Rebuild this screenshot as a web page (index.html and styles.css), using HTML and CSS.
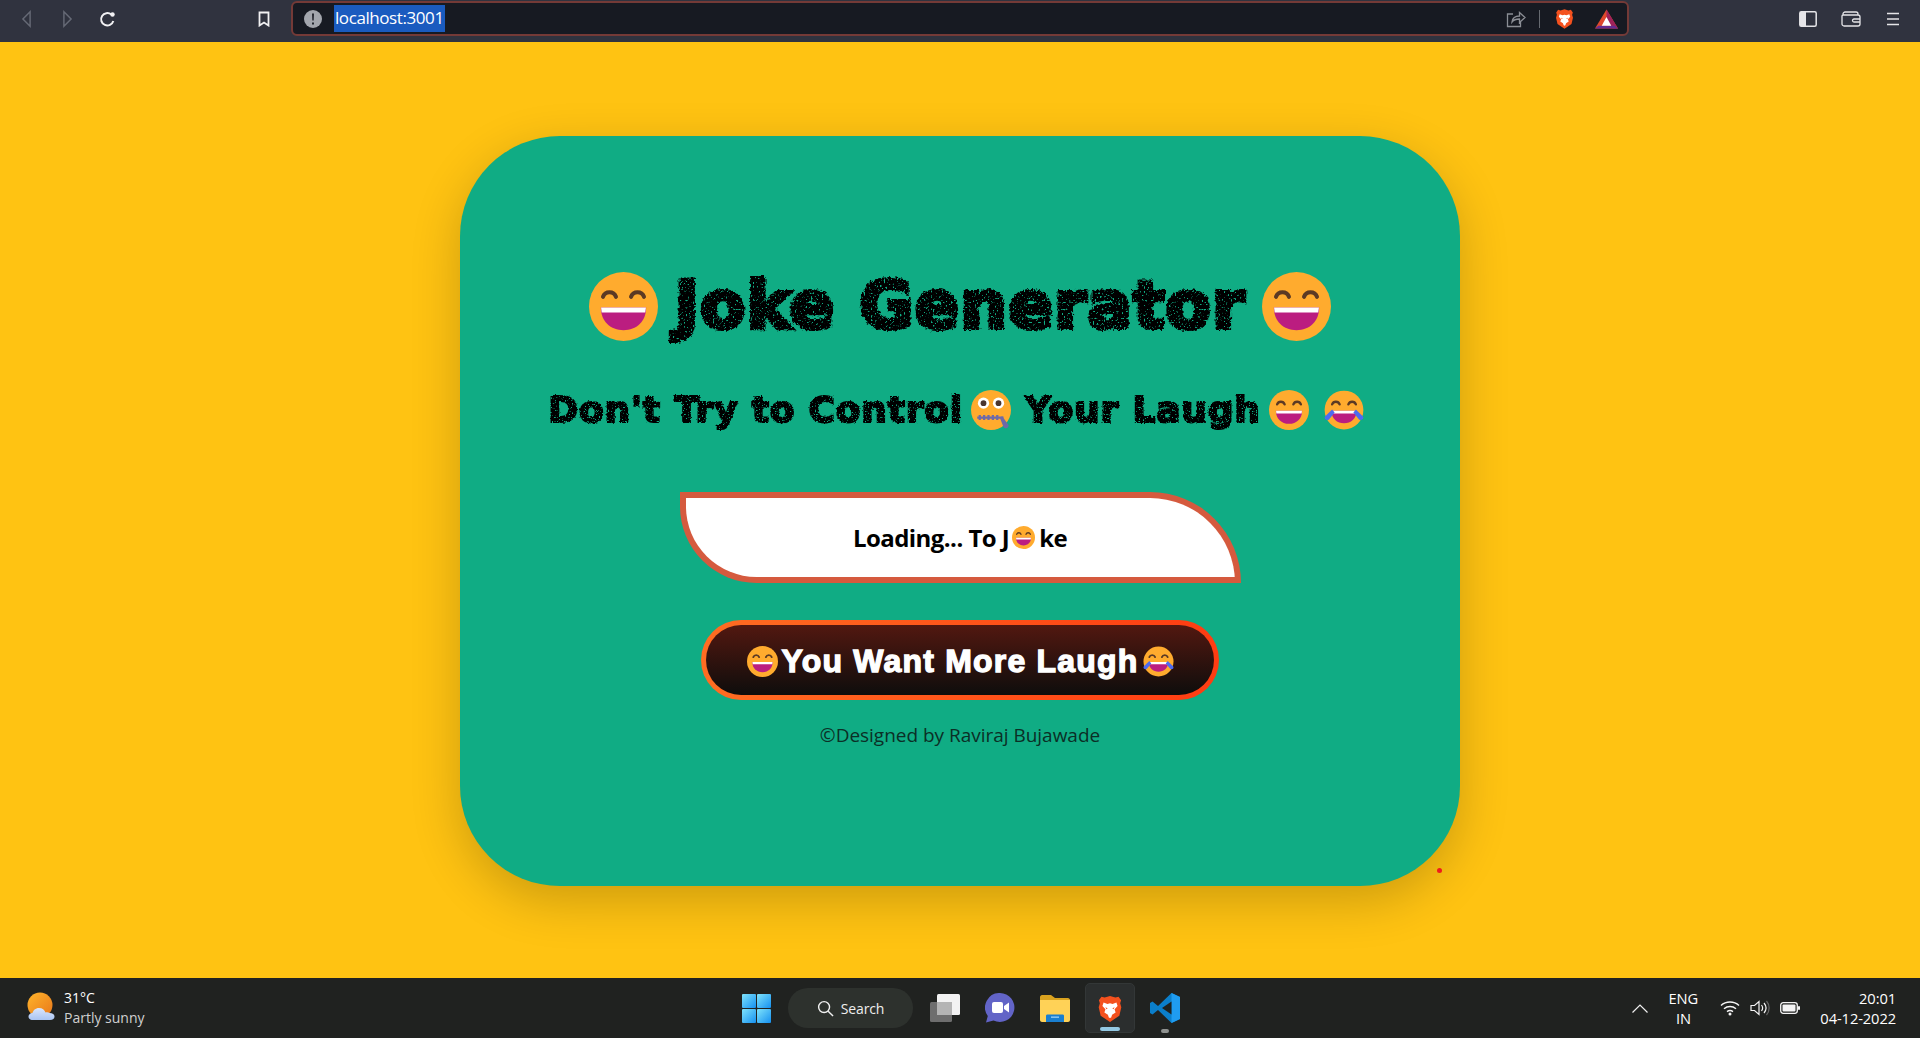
FILE: index.html
```html
<!DOCTYPE html>
<html lang="en">
<head>
<meta charset="utf-8">
<title>Joke Generator</title>
<link rel="stylesheet" href="styles.css">
</head>
<body>
<svg class="sprite" width="0" height="0" aria-hidden="true">
  <defs>
    <filter id="rough" x="-5%" y="-15%" width="110%" height="130%">
      <feTurbulence type="fractalNoise" baseFrequency="0.35" numOctaves="2" seed="4" result="n"/>
      <feDisplacementMap in="SourceGraphic" in2="n" scale="5" xChannelSelector="R" yChannelSelector="G" result="d"/>
      <feTurbulence type="fractalNoise" baseFrequency="0.55" numOctaves="1" seed="9" result="s"/>
      <feColorMatrix in="s" type="matrix" values="0 0 0 0 0 0 0 0 0 0 0 0 0 0 0 -9 0 0 0 6.4" result="m"/>
      <feComposite in="d" in2="m" operator="in"/>
    </filter>
    <filter id="rough-sm" x="-5%" y="-15%" width="110%" height="130%">
      <feTurbulence type="fractalNoise" baseFrequency="0.45" numOctaves="2" seed="7" result="n"/>
      <feDisplacementMap in="SourceGraphic" in2="n" scale="3" xChannelSelector="R" yChannelSelector="G" result="d"/>
      <feTurbulence type="fractalNoise" baseFrequency="0.7" numOctaves="1" seed="3" result="s"/>
      <feColorMatrix in="s" type="matrix" values="0 0 0 0 0 0 0 0 0 0 0 0 0 0 0 -9 0 0 0 6.4" result="m"/>
      <feComposite in="d" in2="m" operator="in"/>
    </filter>
    <symbol id="grin" viewBox="0 0 32 32">
      <circle cx="16" cy="16" r="16" fill="#ffab2e"/>
      <path d="M6.5 11.5a3.2 3.2 0 0 1 6 0M19.5 11.5a3.2 3.2 0 0 1 6 0" fill="none" stroke="#5c3a24" stroke-width="1.9" stroke-linecap="round"/>
      <path d="M5.5 16.5h21c0 6.500-4.500 10.500-10.500 10.500S5.500 23 5.500 16.500z" fill="#bb1d80"/>
      <path d="M5.600 16.500h20.800l-.3 2.300H5.900z" fill="#fff"/>
    </symbol>
    <symbol id="joy" viewBox="0 0 32 32">
      <circle cx="16" cy="16" r="15.500" fill="#ffab2e"/>
      <path d="M6.500 11.500a3.200 3.200 0 0 1 6 0M19.500 11.500a3.200 3.200 0 0 1 6 0" fill="none" stroke="#5c3a24" stroke-width="1.900" stroke-linecap="round"/>
      <path d="M6 16.500h20c0 6.500-4.500 10-10 10s-10-3.500-10-10z" fill="#bb1d80"/>
      <path d="M6 16.500h20l-.3 2.300H6.300z" fill="#fff"/>
      <path d="M6.500 15.500 1 21c-1.500 2 1 4 3 2.500l4.500-5.500zM25.500 15.500 31 21c1.500 2-1 4-3 2.500L23.500 18z" fill="#4e6bf0"/>
    </symbol>
    <symbol id="zip" viewBox="0 0 32 32">
      <circle cx="16" cy="16" r="16" fill="#ffab2e"/>
      <circle cx="10" cy="10.500" r="4.500" fill="#fff"/>
      <circle cx="22" cy="10.500" r="4.500" fill="#fff"/>
      <circle cx="10" cy="10.500" r="2.300" fill="#4a3530"/>
      <circle cx="22" cy="10.500" r="2.300" fill="#4a3530"/>
      <path d="M5 22h21M7 20v4M10.500 20v4M14 20v4M17.500 20v4M21 20v4" fill="none" stroke="#6e6aa8" stroke-width="1.800"/>
      <path d="M25 21l5 7c.5 2.500-2.500 3.500-4 1.500l-3-7.500z" fill="#6e6aa8"/>
    </symbol>
    <symbol id="brave" viewBox="0 0 24 24">
      <path d="M12 .8l4.600 1.400L19.300 1.500l2.200 3-.8 2.600 1 3.500-1.700 7.200L12 23.200l-8-5.400-1.700-7.200 1-3.500-.8-2.600 2.200-3 2.700.7z" fill="#f4511e"/>
      <path d="M6.500 6.500l3.300 1.200L12 7l2.200.7 3.300-1.200 1 3-2.600 2.800.9 2.600-3 2-.8 2.300-1 .6-1-.6-.8-2.300-3-2 .9-2.600-2.600-2.800z" fill="#fff"/>
      <path d="M8 10.500l2 .8-1 .9zM16 10.500l-2 .8 1 .9z" fill="#f4511e"/>
    </symbol>
  </defs>
</svg>

<header class="toolbar">
  <svg class="ico nav-back" viewBox="0 0 12 20"><path d="M10 2 2 10l8 8z" fill="none" stroke="#666a76" stroke-width="1.600"/></svg>
  <svg class="ico nav-fwd" viewBox="0 0 12 20"><path d="M2 2l8 8-8 8z" fill="none" stroke="#666a76" stroke-width="1.600"/></svg>
  <svg class="ico nav-reload" viewBox="0 0 16 18"><path d="M13.800 11a6.200 6.200 0 1 1-2-6.500" fill="none" stroke="#f1f1f3" stroke-width="2"/><circle cx="13" cy="4.500" r="2.200" fill="#f1f1f3"/></svg>
  <svg class="ico nav-mark" viewBox="0 0 12 16"><path d="M1.500 1.500h9v13L6 11.500l-4.500 3z" fill="none" stroke="#f1f1f3" stroke-width="1.800"/></svg>
  <div class="urlbar">
    <svg class="ico url-info" viewBox="0 0 18 18"><circle cx="9" cy="9" r="9" fill="#a3a6ad"/><path d="M8 3.500h2l-.3 7H8.300zM8 12.500h2v2H8z" fill="#23262e"/></svg>
    <span class="url-text">localhost:3001</span>
    <svg class="ico url-share" viewBox="0 0 20 18"><path d="M7 4H1.500v12.500h13V12M6 12c.5-4 3.500-6 7.500-6V2.500L19 7.500l-5.500 5V9C10 9 7.500 10 6 12z" fill="none" stroke="#8b8e95" stroke-width="1.300"/></svg>
    <span class="url-sep"></span>
    <svg class="ico url-brave" viewBox="0 0 24 24"><use href="#brave"/></svg>
    <svg class="ico url-bat" viewBox="0 0 24 20"><path d="M12 0 24 20H0z" fill="#e0482c"/><path d="M12 0 24 20H18L12 10z" fill="#a0225a"/><path d="M0 20l3.500-3h17l3.500 3z" fill="#662d91"/><path d="M12 8l5 9H7z" fill="#fff"/></svg>
  </div>
  <svg class="ico tb-side" viewBox="0 0 18 16"><rect x=".8" y=".8" width="16.400" height="14.400" rx="1.500" fill="none" stroke="#e5e5e8" stroke-width="1.500"/><rect x="1" y="1" width="6" height="14" fill="#e5e5e8"/></svg>
  <svg class="ico tb-wallet" viewBox="0 0 20 16"><path d="M2 4.500V3c0-1 1-2 2-2h11c1 0 2 1 2 2v1.500M1 5c0-.5.500-1 1-1h15c1 0 2 1 2 2v7c0 1-1 2-2 2H3c-1 0-2-1-2-2zM13 8h6v3h-6a1.500 1.500 0 0 1 0-3z" fill="none" stroke="#e5e5e8" stroke-width="1.300"/></svg>
  <svg class="ico tb-menu" viewBox="0 0 12 14"><path d="M0 1.500h12M0 7h12M0 12.500h12" stroke="#e5e5e8" stroke-width="1.500"/></svg>
</header>

<main class="page">
  <section class="card">
    <h1 class="title">
      <svg class="emoji emoji-xl" viewBox="0 0 32 32"><use href="#grin"/></svg>
      <span class="rough-text">Joke Generator</span>
      <svg class="emoji emoji-xl" viewBox="0 0 32 32"><use href="#grin"/></svg>
    </h1>
    <h2 class="subtitle">
      <span class="rough-sub">Don't Try to Control</span>
      <svg class="emoji emoji-lg" viewBox="0 0 32 32"><use href="#zip"/></svg>
      <span class="rough-sub sub-laugh">Your Laugh</span>
      <svg class="emoji emoji-lg" viewBox="0 0 32 32"><use href="#grin"/></svg>
      <svg class="emoji emoji-lg emoji-joy" viewBox="0 0 32 32"><use href="#joy"/></svg>
    </h2>
    <div class="joke">
      <span>Loading... To J</span><svg class="emoji emoji-sm" viewBox="0 0 32 32"><use href="#grin"/></svg><span>ke</span>
    </div>
    <button class="more" type="button">
      <svg class="emoji emoji-btn" viewBox="0 0 32 32"><use href="#grin"/></svg>
      <span>You Want More Laugh</span>
      <svg class="emoji emoji-btn" viewBox="0 0 32 32"><use href="#joy"/></svg>
    </button>
    <p class="credit">©Designed by Raviraj Bujawade</p>
    <span class="dot"></span>
  </section>
</main>

<footer class="taskbar">
  <div class="tb-left">
    <svg class="weather" viewBox="0 0 28 32">
      <defs>
        <linearGradient id="sun" x1="0" y1="0" x2="1" y2="1"><stop offset="0" stop-color="#ffb52b"/><stop offset="1" stop-color="#e8761a"/></linearGradient>
        <linearGradient id="cloud" x1="0" y1="0" x2="0" y2="1"><stop offset="0" stop-color="#dbe6fb"/><stop offset="1" stop-color="#a9c4f2"/></linearGradient>
      </defs>
      <circle cx="13" cy="13" r="12.500" fill="url(#sun)"/>
      <path d="M6 28c-3.500 0-4.500-2-4.500-3.500S3 21 5.500 21c.5-2.500 3-5 6.500-5s5.500 2 6.500 4.500c1-.5 3-.5 4 .5 3 0 5 1.500 5 3.500S26 28 23 28z" fill="url(#cloud)"/>
    </svg>
    <div class="weather-text">
      <span class="temp">31°C</span>
      <span class="cond">Partly sunny</span>
    </div>
  </div>
  <div class="tb-center">
    <svg class="win" viewBox="0 0 29 29">
      <defs><linearGradient id="w" x1="0" y1="0" x2="1" y2="1"><stop offset="0" stop-color="#7fe3fb"/><stop offset="1" stop-color="#1590f0"/></linearGradient></defs>
      <rect width="14" height="14" rx="1" fill="url(#w)"/><rect x="15" width="14" height="14" rx="1" fill="url(#w)"/><rect y="15" width="14" height="14" rx="1" fill="url(#w)"/><rect x="15" y="15" width="14" height="14" rx="1" fill="url(#w)"/>
    </svg>
    <div class="search">
      <svg class="search-ico" viewBox="0 0 18 18"><circle cx="7.500" cy="7.500" r="5.800" fill="none" stroke="#f0f0f0" stroke-width="1.500"/><path d="M11.800 11.800 17 17" stroke="#f0f0f0" stroke-width="1.500"/></svg>
      <span>Search</span>
    </div>
    <svg class="app app-task" viewBox="0 0 30 28"><rect x="7" y="0" width="23" height="21" rx="1.500" fill="#f2f2f2"/><rect x="0" y="8" width="22" height="20" rx="1.500" fill="#6e6e6e"/><rect x="7" y="8" width="15" height="13" fill="#b4b4b4"/></svg>
    <svg class="app app-teams" viewBox="0 0 30 30"><path d="M15 0a14.500 14.500 0 1 1-6.500 27.500L1 29.500l1.800-6.500A14.500 14.500 0 0 1 15 0z" fill="#6264c7"/><rect x="7" y="9" width="11" height="11" rx="2" fill="#fff"/><path d="M19 13l5-3.500v10L19 16z" fill="#fff"/></svg>
    <svg class="app app-folder" viewBox="0 0 30 27"><path d="M0 2c0-1 1-2 2-2h9l4 3h13c1 0 2 1 2 2v4H0z" fill="#d9a21f"/><path d="M0 5h30v20c0 1-1 2-2 2H2c-1 0-2-1-2-2z" fill="#ffd257"/><path d="M5 27v-6c0-1 .5-1.500 1.500-1.500h15c1 0 1.500.5 1.500 1.500v6z" transform="translate(1)" fill="#1a7fd0"/><rect x="11" y="21.500" width="8" height="1.300" fill="#9bd0f5"/></svg>
    <div class="app-active">
      <svg class="brave-task" viewBox="0 0 24 24"><use href="#brave"/></svg>
      <span class="run run-on"></span>
    </div>
    <div class="app-code">
      <svg class="code-ico" viewBox="0 0 30 30"><path d="M21.500 0 30 4v22l-8.500 4L8 17l-5.500 4.500L0 20v-10l2.500-1.500L8 13z" fill="#0b7fcb"/><path d="M21.500 0 30 4v22l-8.500 4z" fill="#1f9cf0"/><path d="M21.500 8.500 12 15l9.500 6.500z" fill="#202320"/></svg>
      <span class="run"></span>
    </div>
  </div>
  <div class="tb-right">
    <svg class="chev" viewBox="0 0 16 9"><path d="M.5 8.500 8 1l7.500 7.500" fill="none" stroke="#f0f0f0" stroke-width="1.200"/></svg>
    <div class="lang"><span>ENG</span><span>IN</span></div>
    <svg class="tray tray-wifi" viewBox="0 0 20 16"><path d="M1 5.500c5-4.700 13-4.700 18 0M4 8.700c3.500-3 8.500-3 12 0M7 11.700c2-1.500 4-1.500 6 0" fill="none" stroke="#f4f4f4" stroke-width="1.500"/><circle cx="10" cy="14" r="1.500" fill="#f4f4f4"/></svg>
    <svg class="tray tray-vol" viewBox="0 0 20 16"><path d="M1 5.500h3.500L9 1.500v13l-4.500-4H1z" fill="none" stroke="#f4f4f4" stroke-width="1.200"/><path d="M11.500 5c1.500 2 1.500 4 0 6M14 3c2.500 3 2.500 7 0 10" fill="none" stroke="#f4f4f4" stroke-width="1.200"/><path d="M16.500 1c3.500 4 3.500 10 0 14" fill="none" stroke="#666" stroke-width="1.200"/></svg>
    <svg class="tray tray-bat" viewBox="0 0 20 12"><rect x=".7" y=".7" width="16.600" height="10.600" rx="2.500" fill="none" stroke="#f4f4f4" stroke-width="1.300"/><rect x="2.500" y="2.500" width="13" height="7" rx="1" fill="#f4f4f4"/><rect x="18" y="4" width="2" height="4" rx="1" fill="#f4f4f4"/></svg>
    <div class="clock"><span>20:01</span><span>04-12-2022</span></div>
  </div>
</footer>
</body>
</html>
```
FILE: styles.css
```css
* { box-sizing: border-box; }
html, body { margin: 0; padding: 0; height: 100%; }
body {
  display: flex;
  flex-direction: column;
  height: 1038px;
  overflow: hidden;
  background: #ffc312;
  font-family: "Open Sans", "Noto Sans", sans-serif;
}
.sprite { position: absolute; }
.ico { display: block; flex: none; }

/* browser toolbar */
.toolbar {
  flex: none;
  height: 42px;
  display: flex;
  align-items: center;
  padding: 1px 21px 6px 21px;
  background: #30333f;
}
.nav-back { width: 11px; height: 18px; }
.nav-fwd { width: 11px; height: 18px; margin-left: 30px; }
.nav-reload { width: 17px; height: 18px; margin-left: 26px; }
.nav-mark { width: 12px; height: 16px; margin-left: 142px; }
.urlbar {
  width: 1338px;
  height: 35px;
  margin-left: 21px;
  display: flex;
  align-items: center;
  padding: 0 9px 0 11px;
  background: #171a22;
  border: 2px solid #743a37;
  border-radius: 6px;
}
.url-info { width: 18px; height: 18px; }
.url-text {
  margin-left: 12px;
  padding: 0 1px;
  height: 27px;
  line-height: 26px;
  font-size: 17px;
  letter-spacing: -.42px;
  color: #fff;
  background: #1a5bbf;
}
.url-share { width: 20px; height: 18px; margin-left: auto; }
.url-sep { width: 1px; height: 18px; margin-left: 13px; background: #666a70; }
.url-brave { width: 21px; height: 22px; margin-left: 14px; }
.url-bat { width: 23px; height: 20px; margin-left: 20px; }
.tb-side { width: 18px; height: 16px; margin-left: 170px; }
.tb-wallet { width: 20px; height: 16px; margin-left: 24px; }
.tb-menu { width: 12px; height: 14px; margin-left: 26px; }

/* page */
.page {
  flex: 1;
  display: flex;
  justify-content: center;
  padding-top: 94px;
}
.card {
  position: relative;
  width: 1000px;
  height: 750px;
  display: flex;
  flex-direction: column;
  align-items: center;
  padding-top: 135px;
  background: #10ac84;
  border-radius: 100px;
  box-shadow: 0 15px 50px rgba(0, 0, 0, .2);
}
.emoji { display: block; flex: none; }
.emoji-xl { width: 69px; height: 69px; }
.emoji-lg { width: 40px; height: 40px; }
.emoji-sm { width: 23px; height: 23px; margin: 0 4px 0 3px; }
.emoji-btn { width: 31px; height: 31px; }
.title {
  margin: 0;
  height: 70px;
  display: flex;
  align-items: center;
  gap: 17px;
}
.rough-text {
  font-family: "DejaVu Sans", sans-serif;
  font-weight: 700;
  font-size: 66px;
  line-height: 70px;
  letter-spacing: 1px;
  color: #000;
  -webkit-text-stroke: 4px #000;
  filter: url(#rough);
}
.subtitle {
  margin: 49px 0 0;
  padding-right: 8px;
  height: 40px;
  display: flex;
  align-items: center;
  gap: 8px;
}
.rough-sub {
  font-family: "DejaVu Sans", sans-serif;
  font-weight: 700;
  font-size: 36px;
  line-height: 40px;
  letter-spacing: .8px;
  color: #000;
  -webkit-text-stroke: 2px #000;
  filter: url(#rough-sm);
}
.sub-laugh { margin-left: 6px; }
.emoji-joy { margin-left: 7px; }
.joke {
  width: 561px;
  height: 91px;
  margin-top: 62px;
  display: flex;
  align-items: center;
  justify-content: center;
  background: #fff;
  border: 6px solid #d55a3e;
  border-radius: 0 95px 0 80px;
  font-family: "Open Sans", sans-serif;
  font-weight: 700;
  font-size: 24px;
  letter-spacing: -.55px;
  color: #000;
}
.more {
  width: 518px;
  height: 80px;
  margin-top: 37px;
  display: flex;
  align-items: center;
  justify-content: center;
  gap: 4px;
  padding: 2px 0 0;
  border: 5px solid transparent;
  border-radius: 40px;
  background:
    linear-gradient(180deg, #521810 0%, #0e0d0c 100%) padding-box,
    linear-gradient(90deg, #ff6d22 0%, #ff3c12 100%) border-box;
  font-family: "Liberation Sans", Arial, sans-serif;
  font-weight: 700;
  font-size: 32px;
  letter-spacing: 1.2px;
  color: #fff;
  -webkit-text-stroke: 1.3px #fff;
}
.credit {
  margin: 21px 0 0;
  font-family: "Open Sans", sans-serif;
  font-size: 19px;
  line-height: 28px;
  letter-spacing: -.02px;
  color: #0b2f26;
}
.dot {
  position: absolute;
  left: 977px;
  top: 732px;
  width: 5px;
  height: 5px;
  border-radius: 50%;
  background: #ee1c1c;
}

/* taskbar */
.taskbar {
  flex: none;
  height: 60px;
  display: grid;
  grid-template-columns: 1fr auto 1fr;
  align-items: center;
  background: #202220;
  color: #fff;
  font-family: "Open Sans", sans-serif;
}
.tb-left { display: flex; align-items: center; padding-left: 27px; gap: 9px; }
.weather { width: 28px; height: 32px; flex: none; }
.weather-text { display: flex; flex-direction: column; font-size: 14px; line-height: 20px; }
.cond { color: #d0d0d0; }
.tb-center { display: flex; align-items: center; padding-left: 2px; }
.win { width: 29px; height: 29px; flex: none; }
.search {
  width: 125px;
  height: 40px;
  margin-left: 17px;
  display: flex;
  align-items: center;
  justify-content: center;
  gap: 7px;
  border-radius: 20px;
  background: #2d312d;
  font-size: 14px;
  letter-spacing: -.1px;
  color: #eee;
}
.search-ico { width: 17px; height: 17px; }
.app { flex: none; }
.app-task { width: 30px; height: 28px; margin-left: 17px; }
.app-teams { width: 30px; height: 30px; margin-left: 25px; }
.app-folder { width: 30px; height: 27px; margin-left: 25px; }
.app-active {
  position: relative;
  width: 50px;
  height: 50px;
  margin-left: 15px;
  display: flex;
  justify-content: center;
  padding-top: 10px;
  background: #2b2e2e;
  border: 1px solid #333737;
  border-radius: 5px;
}
.brave-task { width: 28px; height: 30px; }
.app-code {
  position: relative;
  width: 30px;
  height: 50px;
  margin-left: 15px;
  display: flex;
  justify-content: center;
  padding-top: 10px;
}
.code-ico { width: 30px; height: 30px; }
.run {
  position: absolute;
  left: 50%;
  bottom: 0;
  width: 8px;
  height: 4px;
  margin-left: -4px;
  border-radius: 2px;
  background: #8f9290;
}
.run-on { width: 20px; margin-left: -10px; bottom: 1px; background: #94c9e4; }
.tb-right {
  display: flex;
  align-items: center;
  justify-content: flex-end;
  padding-right: 24px;
  font-size: 14.700px;
  letter-spacing: -.1px;
}
.chev { width: 16px; height: 9px; flex: none; }
.lang { display: flex; flex-direction: column; align-items: center; width: 32px; margin-left: 19px; line-height: 20px; }
.tray { flex: none; }
.tray-wifi { width: 20px; height: 16px; margin-left: 21px; }
.tray-vol { width: 20px; height: 16px; margin-left: 10px; }
.tray-bat { width: 20px; height: 12px; margin-left: 10px; }
.clock { display: flex; flex-direction: column; align-items: flex-end; margin-left: 20px; line-height: 20px; }
```
